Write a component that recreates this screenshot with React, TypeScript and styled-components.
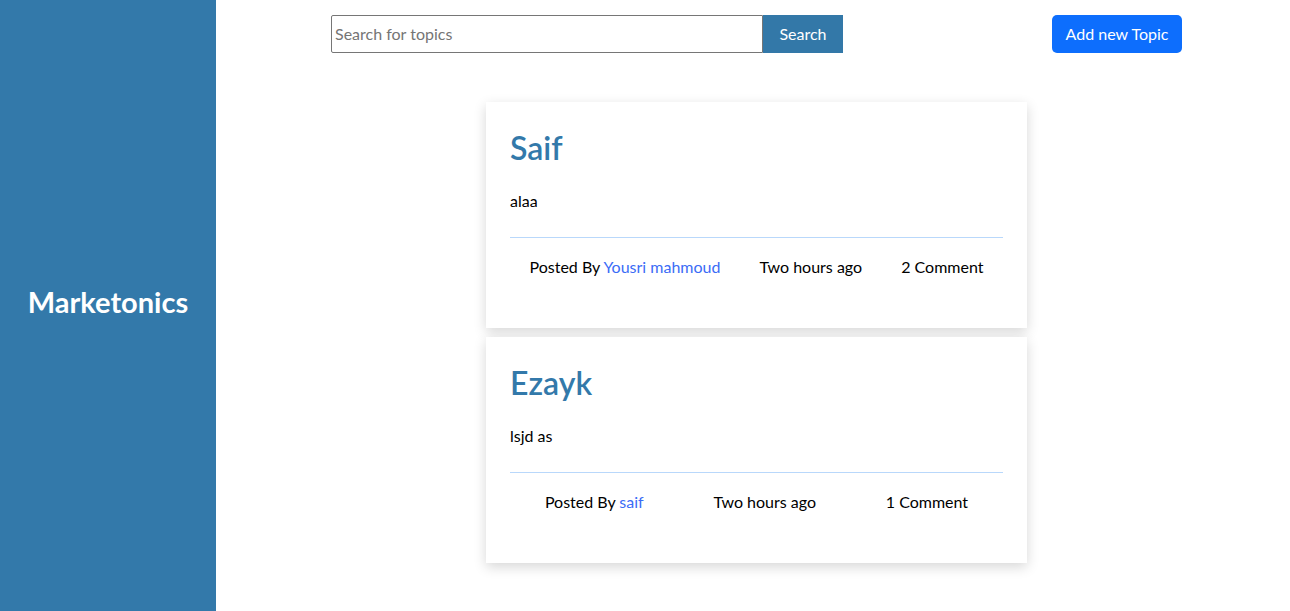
import React from "react";
import styled, { createGlobalStyle } from "styled-components";

const Global = createGlobalStyle`
  html, body { margin: 0; padding: 0; background: #fff; }
  body { font-family: Lato, "Open Sans", sans-serif; font-size: 16px; color: #000; }
  * { box-sizing: border-box; }
`;

const Page = styled.div`
  display: flex;
  min-height: 611px;
`;

const Sidebar = styled.aside`
  width: 216px;
  flex: 0 0 216px;
  background: #3379aa;
  display: flex;
  align-items: center;
  justify-content: center;
  padding-bottom: 8px;
`;

const Brand = styled.h1`
  margin: 0;
  color: #fff;
  font-size: 29px;
  font-weight: 700;
`;

const Main = styled.main`
  flex: 1;
  display: flex;
  flex-direction: column;
  padding: 15px 0 0;
`;

const Header = styled.div`
  display: flex;
  align-items: center;
  padding-left: 115px;
  padding-right: 108px;
  justify-content: space-between;
`;

const SearchForm = styled.form`
  display: flex;
`;

const SearchInput = styled.input`
  width: 432px;
  height: 38px;
  border: 1px solid #767676;
  border-radius: 2px 0 0 2px;
  padding: 0 3px 1px;
  font-family: inherit;
  font-size: 16px;
  color: #000;
  outline: none;
  &::placeholder { color: #757575; }
`;

const Button = styled.button<{ $variant: "search" | "primary" }>`
  height: 38px;
  border: none;
  color: #fff;
  font-family: inherit;
  font-size: 16px;
  padding: 0 0 2px;
  cursor: pointer;
  background: ${(p) => (p.$variant === "search" ? "#3378a8" : "#0d6efd")};
  width: ${(p) => (p.$variant === "search" ? "80px" : "130px")};
  border-radius: ${(p) => (p.$variant === "search" ? "0" : "5px")};
`;

const List = styled.div`
  display: flex;
  flex-direction: column;
  align-items: center;
  gap: 9px;
  margin-top: 49px;
  padding-left: 7px;
`;

const Card = styled.article`
  width: 541px;
  height: 226px;
  background: #fff;
  box-shadow: 0 4px 12px rgba(0, 0, 0, 0.16);
  padding: 23px 24px 0;
`;

const Title = styled.h2`
  margin: 0;
  color: #3379aa;
  font-size: 32px;
  font-weight: 600;
  line-height: 46px;
`;

const Body = styled.p`
  margin: 18px 0 0;
  line-height: 24px;
`;

const Divider = styled.div`
  margin-top: 24px;
  height: 1px;
  background: #b9d8fb;
`;

const Footer = styled.div`
  display: flex;
  justify-content: space-around;
  margin-top: 17px;
  line-height: 24px;
`;

const Author = styled.a`
  color: #3b6cf6;
  text-decoration: none;
`;

const topics = [
  { title: "Saif", body: "alaa", author: "Yousri mahmoud", time: "Two hours ago", comments: "2 Comment" },
  { title: "Ezayk", body: "lsjd as", author: "saif", time: "Two hours ago", comments: "1 Comment" },
];

export default function App() {
  return (
    <>
      <Global />
      <Page>
        <Sidebar>
          <Brand>Marketonics</Brand>
        </Sidebar>
        <Main>
          <Header>
            <SearchForm onSubmit={(e) => e.preventDefault()}>
              <SearchInput placeholder="Search for topics" />
              <Button $variant="search" type="submit">Search</Button>
            </SearchForm>
            <Button $variant="primary" type="button">Add new Topic</Button>
          </Header>
          <List>
            {topics.map((t) => (
              <Card key={t.title}>
                <Title>{t.title}</Title>
                <Body>{t.body}</Body>
                <Divider />
                <Footer>
                  <span>
                    Posted By <Author href="#">{t.author}</Author>
                  </span>
                  <span>{t.time}</span>
                  <span>{t.comments}</span>
                </Footer>
              </Card>
            ))}
          </List>
        </Main>
      </Page>
    </>
  );
}
